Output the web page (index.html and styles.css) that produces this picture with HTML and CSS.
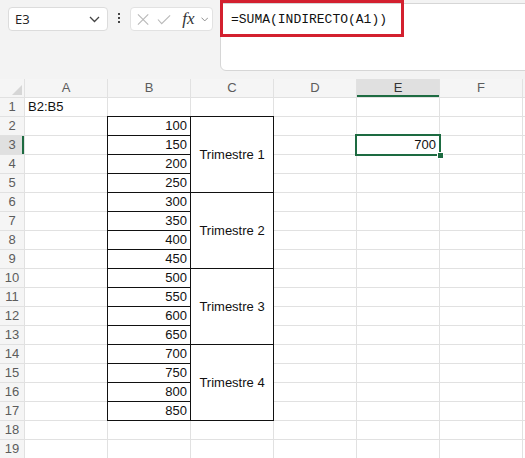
FILE: index.html
```html
<!DOCTYPE html>
<html lang="es">
<head>
  <meta charset="UTF-8">
  <title>INDIRECTO</title>
  <link rel="stylesheet" href="styles.css">
</head>
<body>
  <div class="toolbar">
    <div class="namebox">
      <span>E3</span>
      <svg class="chev" width="11" height="7" viewBox="0 0 11 7"><path d="M1 1l4.5 4.5L10 1" fill="none" stroke="#444" stroke-width="1.3"/></svg>
    </div>
    <div class="dots"><i></i><i></i><i></i></div>
    <div class="fxbox">
      <svg width="13" height="13" viewBox="0 0 13 13"><path d="M1 1l11 11M12 1L1 12" stroke="#b9b9b9" stroke-width="1.2"/></svg>
      <svg width="15" height="11" viewBox="0 0 15 11"><path d="M1 5.5l4 4.5L14 1" fill="none" stroke="#b9b9b9" stroke-width="1.2"/></svg>
      <span class="fx">fx</span>
      <svg width="8" height="5" viewBox="0 0 8 5"><path d="M.5.5L4 4 7.5.5" fill="none" stroke="#888" stroke-width="1"/></svg>
    </div>
    <div class="formula">=SUMA(INDIRECTO(A1))</div>
    <div class="highlight"></div>
  </div>

  <div class="sheet" id="sheet"></div>

  <script>
    const cols = ['A', 'B', 'C', 'D', 'E', 'F', ''];
    const sheet = document.getElementById('sheet');

    function addCell(cls, text) {
      const c = document.createElement('div');
      c.className = cls;
      if (text !== undefined) c.textContent = text;
      sheet.appendChild(c);
      return c;
    }

    addCell('corner');
    cols.forEach(l => addCell(l === 'E' ? 'colhead active' : 'colhead', l));

    for (let r = 1; r <= 19; r++) {
      addCell(r === 3 ? 'rowhead active' : 'rowhead', r);
      cols.forEach(l => {
        if (l === 'C' && r >= 2 && r <= 17) {
          // merged C2:C5, C6:C9, ...
          if ((r - 2) % 4 === 0) {
            const m = addCell('cell merged', 'Trimestre ' + ((r - 2) / 4 + 1));
            m.style.gridRow = 'span 4';
          }
          return;
        }
        if (l === 'A' && r === 1) {
          addCell('cell', 'B2:B5');
        } else if (l === 'B' && r >= 2 && r <= 17) {
          addCell('cell num boxed', 100 + (r - 2) * 50);
        } else if (l === 'E' && r === 3) {
          const s = addCell('cell num selected', '700');
          const h = document.createElement('span');
          h.className = 'handle';
          s.appendChild(h);
        } else {
          addCell('cell');
        }
      });
    }
  </script>
</body>
</html>
```

FILE: styles.css
```css
body {
  margin: 0;
  background: #f3f3f3;
  overflow: hidden;
  font-family: "Liberation Sans", Arial, sans-serif;
}
.toolbar {
  position: relative;
  height: 79px;
  display: flex;
  align-items: flex-start;
}
.namebox {
  margin: 7px 0 0 8px;
  width: 100px;
  height: 24px;
  box-sizing: border-box;
  background: white;
  border: 1px solid #dcdcdc;
  border-radius: 4px;
  display: flex;
  align-items: center;
  justify-content: space-between;
  padding: 0 7px 0 6px;
  font-family: "Open Sans", sans-serif;
  font-size: 13px;
  color: #222;
}
.dots {
  width: 22px;
  margin-top: 13px;
  display: flex;
  flex-direction: column;
  align-items: center;
  gap: 2px;
}
.dots i {
  width: 2px;
  height: 2px;
  background: #444;
}
.fxbox {
  margin-top: 7px;
  width: 83px;
  height: 24px;
  box-sizing: border-box;
  background: white;
  border: 1px solid #e2e2e2;
  border-radius: 4px;
  display: flex;
  align-items: center;
  padding: 0 4px 0 6px;
  gap: 8px;
}
.fx {
  font-family: "Liberation Serif", serif;
  font-style: italic;
  font-size: 17px;
  color: #333;
  margin-left: 3px;
  margin-right: -2px;
}
.formula {
  flex: 1;
  margin: 3px -10px 0 7px;
  height: 68px;
  box-sizing: border-box;
  background: white;
  border: 1px solid #d6d6d6;
  border-radius: 0 0 0 6px;
  padding: 7px 0 0 10px;
  font-family: "Liberation Mono", monospace;
  font-size: 13px;
  line-height: 18px;
  color: #111;
}
.highlight {
  position: absolute;
  left: 220px;
  top: 0;
  width: 184px;
  height: 37px;
  box-sizing: border-box;
  border: 3px solid #d3202f;
}
.sheet {
  display: grid;
  grid-template-columns: 24px repeat(6, 82px) 1fr;
  grid-auto-rows: 18px;
  gap: 1px;
  background: #e1e1e1;
  font-size: 13px;
  line-height: 18px;
  color: #111;
}
.corner {
  background: #f5f5f5;
  position: relative;
}
.corner::after {
  content: "";
  position: absolute;
  right: 2px;
  bottom: 2px;
  border-left: 10px solid transparent;
  border-bottom: 10px solid #d6d6d6;
}
.colhead, .rowhead {
  background: #f5f5f5;
  color: #5c5c5c;
  text-align: center;
}
.colhead.active {
  background: #e0e0e0;
  box-shadow: inset 0 -2px 0 #1d6b41;
  color: #333;
}
.rowhead.active {
  background: #e0e0e0;
  box-shadow: inset -2px 0 0 #1d6b41;
}
.cell {
  background: white;
  padding: 0 3px;
  white-space: nowrap;
}
.num { text-align: right; }
.boxed { outline: 1px solid #111; }
.merged {
  outline: 1px solid #111;
  display: flex;
  align-items: center;
  justify-content: center;
}
.selected {
  position: relative;
  outline: 2px solid #1d6b41;
}
.handle {
  position: absolute;
  right: -5px;
  bottom: -5px;
  width: 5px;
  height: 5px;
  background: #1d6b41;
  border: 1px solid white;
}
```
